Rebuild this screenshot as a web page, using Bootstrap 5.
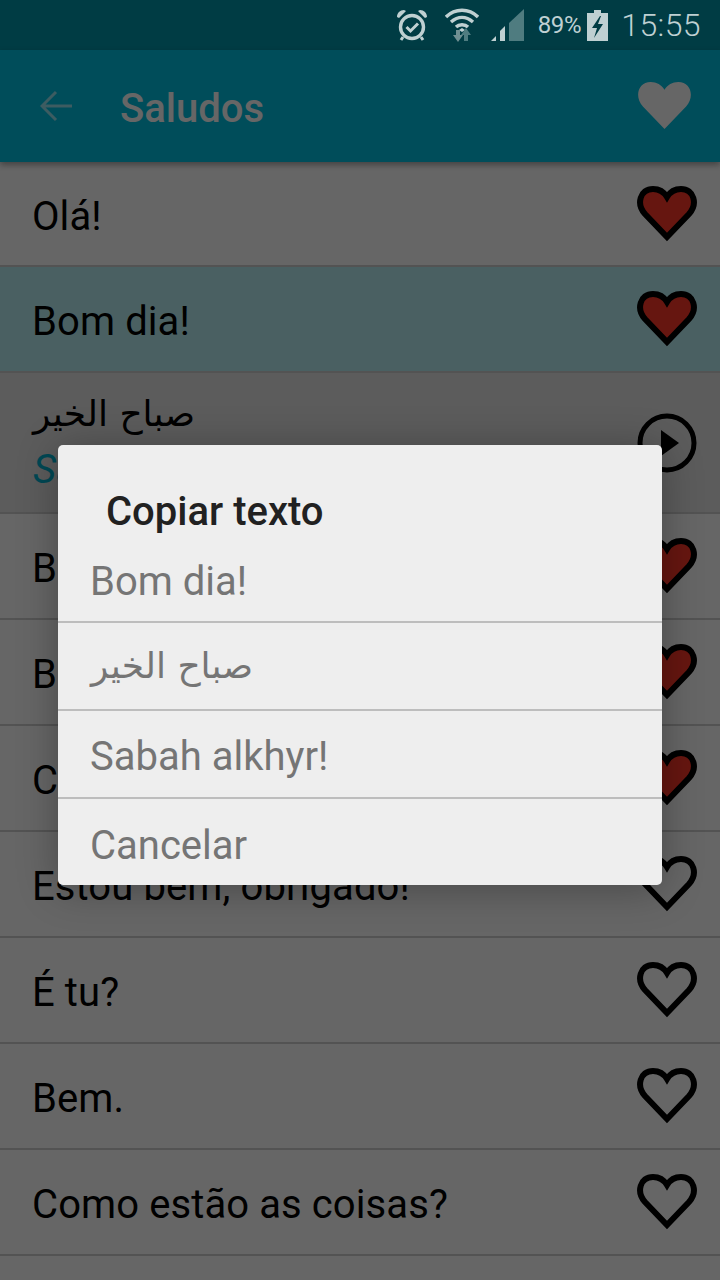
<!DOCTYPE html>
<html lang="es">
<head>
    <meta charset="UTF-8">
    <meta name="viewport" content="width=device-width, initial-scale=1.0">
    <title>Saludos</title>
    <link href="https://cdn.jsdelivr.net/npm/bootstrap@5.3.0/dist/css/bootstrap.min.css" rel="stylesheet">
    <style>
        body {
            font-family: Roboto, "DejaVu Sans", sans-serif;
            background: #fff;
            margin: 0;
            width: 720px;
            height: 1280px;
            overflow: hidden;
            position: relative;
        }

        /* Status bar */
        .status-strip {
            height: 50px;
            background: #003c44;
            color: #bfd0d2;
            padding-right: 19px;
        }
        .status-pct { font-size: 24px; margin-left: 14px; margin-right: 6px; letter-spacing: -.3px; }
        .status-clock { font-size: 32px; font-weight: 300; margin-left: 13px; letter-spacing: .4px; }
        .gap-wifi { margin-left: 17px; }
        .gap-signal { margin-left: 12px; }

        /* App bar */
        .app-strip {
            height: 112px;
            background: #00c0e1;
            box-shadow: 0 3px 6px rgba(0, 0, 0, .35);
            padding: 0 26px 0 40px;
            position: relative;
            color: #fff;
        }
        .app-title { font-size: 40px; font-weight: 500; margin-left: 48px; padding-top: 6px; }

        /* Phrase rows */
        .phrase-row {
            height: 106px;
            padding: 0 23px 0 33px;
            border-bottom: 2px solid #d0d0d0;
            font-size: 40px;
            letter-spacing: .1px;
            color: #000;
            background: #fff;
        }
        .phrase-row.row-first { height: 105px; }
        .phrase-row.row-active { background: #b9f0f5; }
        .phrase-row.row-open { height: 141px; background: #e6e6e6; }
        .phrase-ar { font-family: "DejaVu Sans", sans-serif; font-size: 36px; line-height: 50px; text-align: left; }
        .phrase-tr { font-style: italic; color: #00b4d2; line-height: 54px; padding-top: 4px; }
        .phrase-txt { padding-top: 6px; margin-left: -1px; }

        /* Dim layer and dialog */
        .dim-layer {
            position: absolute;
            top: 50px;
            left: 0;
            right: 0;
            bottom: 0;
            background: rgba(0, 0, 0, .6);
        }
        .copy-dialog {
            position: absolute;
            top: 445px;
            left: 58px;
            width: 604px;
            height: 440px;
            background: #eee;
            border-radius: 5px;
            box-shadow: 0 4px 40px rgba(0, 0, 0, .3);
        }
        .copy-title {
            height: 91px;
            padding: 40px 0 0 48px;
            font-size: 40px;
            line-height: 54px;
            font-weight: 500;
            color: #212121;
        }
        .copy-item {
            height: 88px;
            padding-left: 32px;
            font-size: 40px;
            color: #757575;
            border-bottom: 2px solid #bdbdbd;
        }
        .copy-item.item-first { height: 87px; }
        .copy-item.item-low { padding-top: 6px; }
        .copy-item.item-ar { padding-left: 33px; }
        .copy-item:last-child { border-bottom: 0; height: 87px; }
        .copy-item .phrase-ar { color: #757575; }
    </style>
</head>

<body>

<!-- Status bar -->
<div class="status-strip d-flex align-items-center justify-content-end">
    <svg width="32" height="34" viewBox="0 0 32 34">
        <circle cx="16" cy="19" r="11.5" fill="none" stroke="#bfd0d2" stroke-width="3.4"/>
        <path d="M10.5 19l4 4L22 15.5" fill="none" stroke="#bfd0d2" stroke-width="3"/>
        <path d="M1 9c0-4 3-7 7-7l2 1-7 7zM31 9c0-4-3-7-7-7l-2 1 7 7z" fill="#bfd0d2"/>
        <path d="M7 29l-2 3M25 29l2 3" stroke="#bfd0d2" stroke-width="3"/>
    </svg>
    <svg class="gap-wifi" width="34" height="34" viewBox="0 0 34 34">
        <path d="M1 9C10 0 24 0 33 9M6 14C13 8 21 8 28 14M11 19C14 16 20 16 23 19" fill="none" stroke="#bfd0d2" stroke-width="3.4"/>
        <path d="M14 22l3-2 3 2-3 2z" fill="#bfd0d2"/>
        <path d="M7 26h3v-5h4v5h3l-5 7z" fill="#6f8f92" transform="translate(1 1)"/>
        <path d="M21 20l5 7h-3v6h-4v-6h-3z" fill="#4f7c80"/>
    </svg>
    <svg class="gap-signal" width="33" height="32" viewBox="0 0 33 32">
        <path d="M0 32l5-5v5z" fill="#bfd0d2"/>
        <path d="M9 22l5-5v15H9z" fill="#bfd0d2"/>
        <path d="M18 14L33 0v32H18z" fill="#4f7c80"/>
    </svg>
    <span class="status-pct">89%</span>
    <svg width="21" height="31" viewBox="0 0 21 31">
        <path d="M7 0h7v3h7v28H0V3h7z" fill="#bfd0d2"/>
        <path d="M13 6L5 18h5l-3 10 9-14h-5l3-8z" fill="#003c44"/>
    </svg>
    <span class="status-clock">15:55</span>
</div>

<!-- App bar -->
<div class="app-strip d-flex align-items-center">
    <svg width="32" height="32" viewBox="0 0 32 32">
        <path d="M32 16H3M16 2L2 16l14 14" fill="none" stroke="#fff" stroke-opacity=".6" stroke-width="3"/>
    </svg>
    <span class="app-title flex-grow-1">Saludos</span>
    <svg width="59" height="55" viewBox="0 0 60 56"><use href="#heartShape" fill="#fff"/></svg>
</div>

<!-- Phrases -->
<svg width="0" height="0" class="d-block">
    <defs>
        <path id="heartShape" d="M30 51L8 28C-1 18 3 3 16 3C22 3 27 6 30 11C33 6 38 3 44 3C57 3 61 18 52 28Z"/>
    </defs>
</svg>

<div>
    <div class="phrase-row row-first d-flex align-items-center justify-content-between">
        <span class="phrase-txt">Olá!</span>
        <svg width="60" height="56" viewBox="0 0 60 56"><use href="#heartShape" fill="#ff3728" stroke="#000" stroke-width="6"/></svg>
    </div>
    <div class="phrase-row row-active d-flex align-items-center justify-content-between">
        <span class="phrase-txt">Bom dia!</span>
        <svg width="60" height="56" viewBox="0 0 60 56"><use href="#heartShape" fill="#ff3728" stroke="#000" stroke-width="6"/></svg>
    </div>
    <div class="phrase-row row-open d-flex align-items-center justify-content-between">
        <div>
            <div class="phrase-ar" dir="rtl">صباح الخير</div>
            <div class="phrase-tr">Sabah alkhyr!</div>
        </div>
        <svg width="60" height="60" viewBox="0 0 60 60">
            <circle cx="30" cy="30" r="27" fill="none" stroke="#000" stroke-width="5"/>
            <path d="M24 17l18 13-18 13z" fill="#000"/>
        </svg>
    </div>
    <div class="phrase-row d-flex align-items-center justify-content-between">
        <span class="phrase-txt">Boa tarde!</span>
        <svg width="60" height="56" viewBox="0 0 60 56"><use href="#heartShape" fill="#ff3728" stroke="#000" stroke-width="6"/></svg>
    </div>
    <div class="phrase-row d-flex align-items-center justify-content-between">
        <span class="phrase-txt">Boa noite!</span>
        <svg width="60" height="56" viewBox="0 0 60 56"><use href="#heartShape" fill="#ff3728" stroke="#000" stroke-width="6"/></svg>
    </div>
    <div class="phrase-row d-flex align-items-center justify-content-between">
        <span class="phrase-txt">Como estás?</span>
        <svg width="60" height="56" viewBox="0 0 60 56"><use href="#heartShape" fill="#ff3728" stroke="#000" stroke-width="6"/></svg>
    </div>
    <div class="phrase-row d-flex align-items-center justify-content-between">
        <span class="phrase-txt">Estou bem, obrigado!</span>
        <svg width="60" height="56" viewBox="0 0 60 56"><use href="#heartShape" fill="none" stroke="#000" stroke-width="6"/></svg>
    </div>
    <div class="phrase-row d-flex align-items-center justify-content-between">
        <span class="phrase-txt">É tu?</span>
        <svg width="60" height="56" viewBox="0 0 60 56"><use href="#heartShape" fill="none" stroke="#000" stroke-width="6"/></svg>
    </div>
    <div class="phrase-row d-flex align-items-center justify-content-between">
        <span class="phrase-txt">Bem.</span>
        <svg width="60" height="56" viewBox="0 0 60 56"><use href="#heartShape" fill="none" stroke="#000" stroke-width="6"/></svg>
    </div>
    <div class="phrase-row d-flex align-items-center justify-content-between">
        <span class="phrase-txt">Como estão as coisas?</span>
        <svg width="60" height="56" viewBox="0 0 60 56"><use href="#heartShape" fill="none" stroke="#000" stroke-width="6"/></svg>
    </div>
</div>

<!-- Dialog -->
<div class="dim-layer"></div>
<div class="copy-dialog">
    <div class="copy-title">Copiar texto</div>
    <div class="copy-item item-first item-low d-flex align-items-center">Bom dia!</div>
    <div class="copy-item item-ar d-flex align-items-center"><span class="phrase-ar" dir="rtl">صباح الخير</span></div>
    <div class="copy-item item-low d-flex align-items-center">Sabah alkhyr!</div>
    <div class="copy-item item-low d-flex align-items-center">Cancelar</div>
</div>

<script src="https://cdn.jsdelivr.net/npm/bootstrap@5.3.0/dist/js/bootstrap.bundle.min.js"></script>
</body>
</html>
